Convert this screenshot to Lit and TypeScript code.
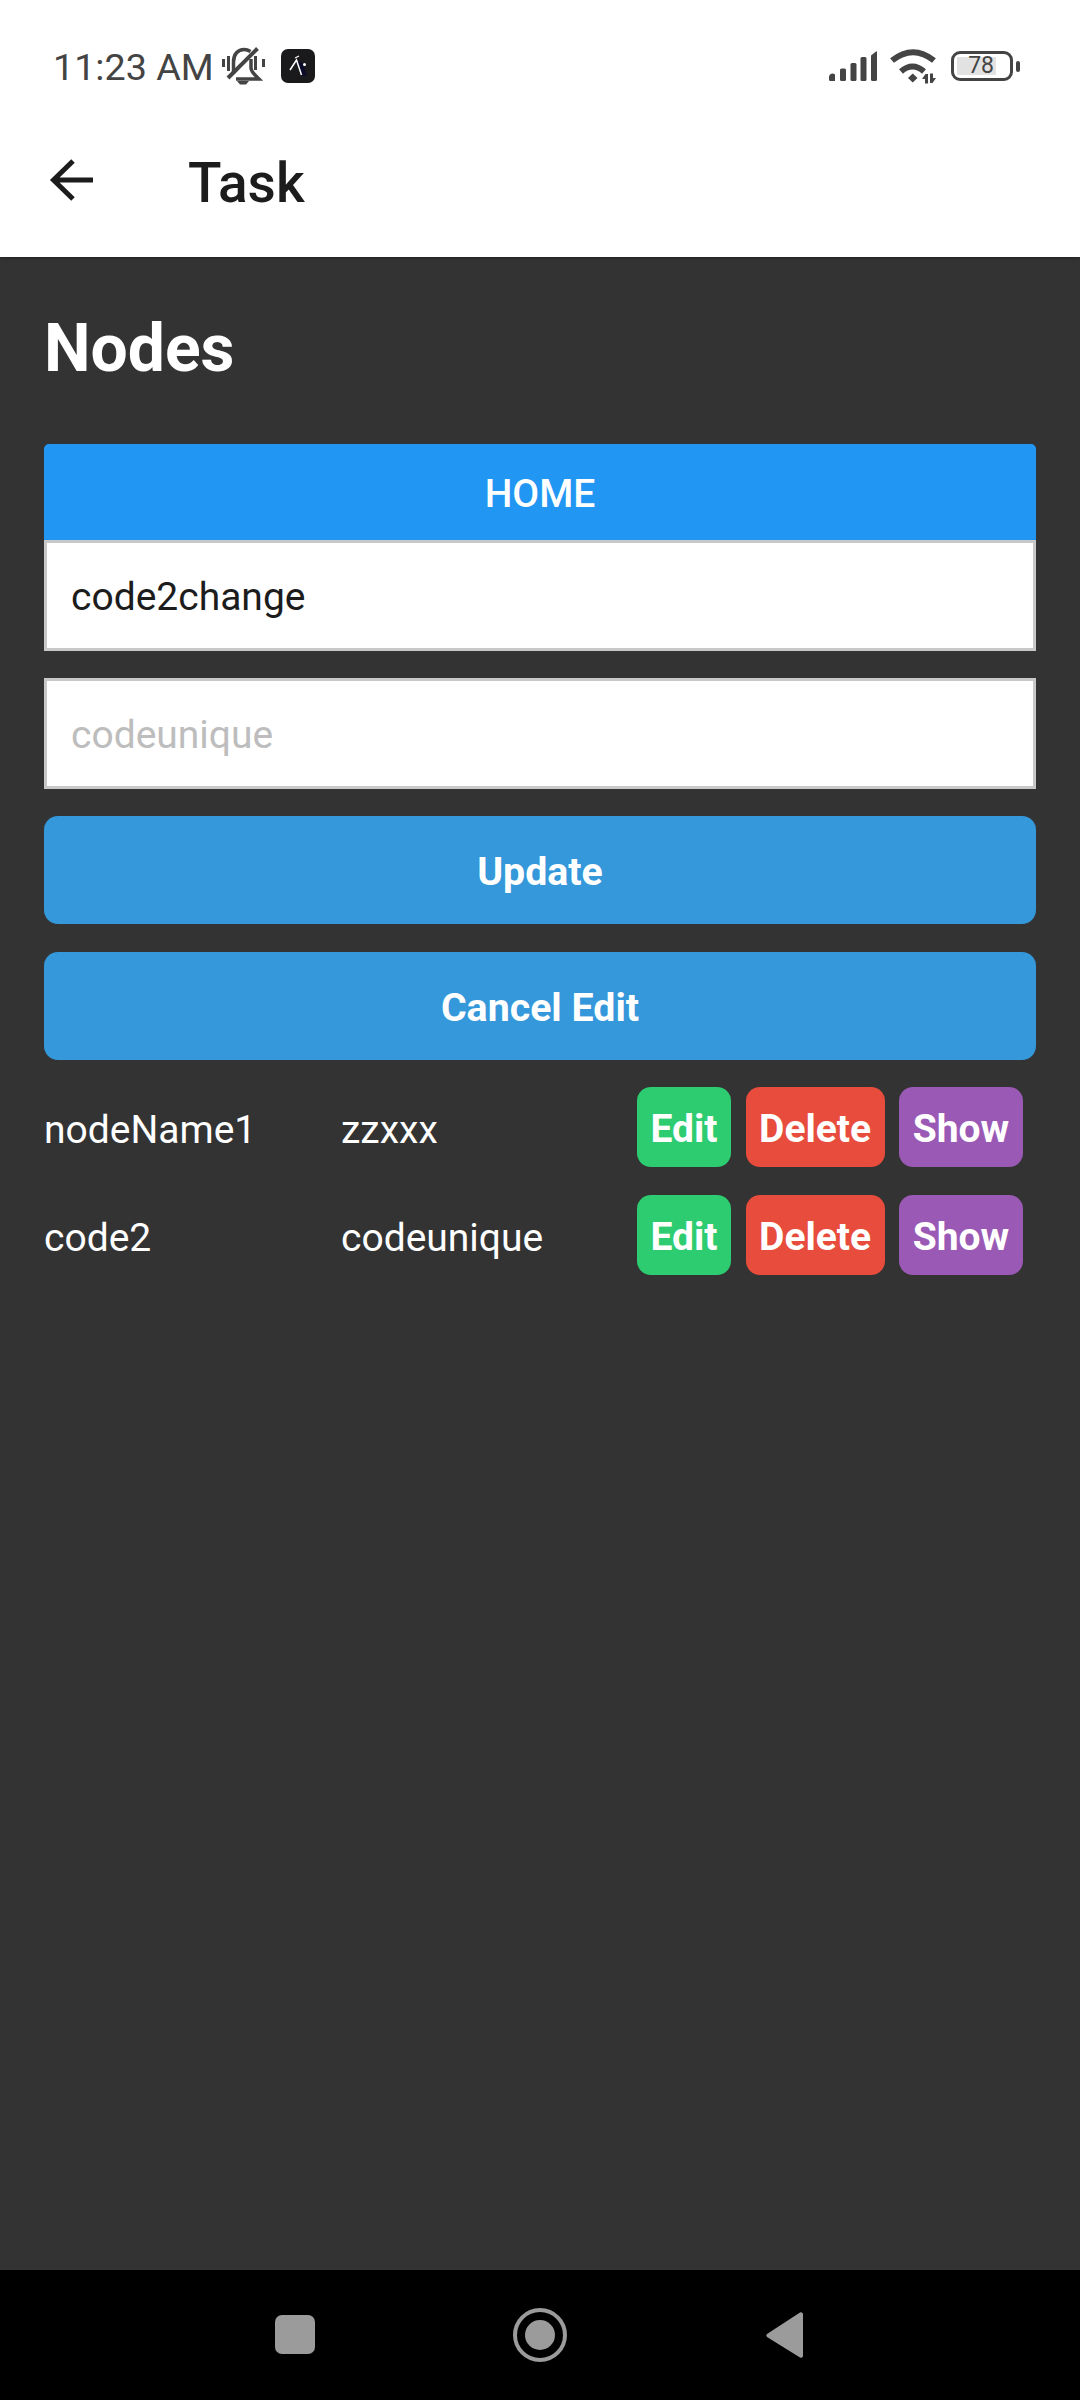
import { LitElement, css, html, svg } from 'lit';
import { customElement } from 'lit/decorators.js';

const nodes = [
    { name: 'nodeName1', code: 'zzxxx' },
    { name: 'code2', code: 'codeunique' },
];

const signalIcon = svg`<svg class="signal" width="48" height="30" viewBox="0 0 48 30" fill="#444">
    <path d="M0 26a3.500 3.500 0 0 1 6-2.500v6.500h-4.500a1.500 1.500 0 0 1-1.500-1.500z"/>
    <rect x="11" y="17.500" width="6" height="12.500" rx="1.500"/>
    <rect x="21.500" y="12" width="6" height="18" rx="1.500"/>
    <rect x="31.500" y="6" width="6" height="24" rx="1.500"/>
    <path d="M42 4.500 47 0.500a0.600 0.600 0 0 1 1 .5v27.500a1.500 1.500 0 0 1-1.500 1.500h-3a1.500 1.500 0 0 1-1.500-1.500z"/>
</svg>`;

const wifiIcon = svg`<svg class="wifi" width="46" height="36" viewBox="0 0 46 36" fill="none">
    <path d="M2 12.500Q23 -4 44 12.500" stroke="#444" stroke-width="6"/>
    <path d="M11 23.500Q22.500 13.500 34 23.500" stroke="#444" stroke-width="6"/>
    <path d="M18 30 22.700 25.500l4.800 4.500-4.800 4.500z" fill="#444"/>
    <path d="M32 31l3.500-5h2.500v9.500h-3v-4.500zM40 25.500h3v4.500h3l-3.500 5H40z" fill="#444"/>
</svg>`;

const bellIcon = svg`<svg class="bell" width="46" height="38" viewBox="0 0 46 38" fill="none" stroke="#444">
    <path d="M13.500 27V15C13.500 7 18 2.500 24 2.500c2.500 0 4.500.7 6.500 2" stroke-width="3.500"/>
    <path d="M31 12v9c0 4 4 7 8 11H16" stroke-width="3.500"/>
    <path d="M37.500 1.500 8 31" stroke-width="4"/>
    <path d="M3.500 12v8M8.500 9v15M35.500 9v14M43.500 12v8" stroke-width="3"/>
    <path d="M17 34h12l-3 3.500h-6z" fill="#444" stroke="none"/>
</svg>`;

const appIcon = svg`<svg class="app" width="34" height="34" viewBox="0 0 34 34">
    <rect width="34" height="34" rx="7" fill="#1a1a1c"/>
    <path d="M15 13h6l5 14h-5z" fill="#0b0b2a"/>
    <path d="M9 21 15.500 11l5 15" fill="none" stroke="#fff" stroke-width="1.500"/>
    <path d="M14 9l4-2" stroke="#fff" stroke-width="1.200"/>
    <circle cx="23.500" cy="15.500" r="1.500" fill="#fff"/>
</svg>`;

@customElement('app-root')
export class AppRoot extends LitElement {

    static styles = css`
        :host {
            display: flex;
            flex-direction: column;
            height: 2400px;
            font-family: Roboto, "Noto Sans", sans-serif;
            background: #333333;
        }

        .top {
            flex: none;
            background: #fff;
            box-shadow: 0 1px 3px rgba(0, 0, 0, 0.4);
            position: relative;
        }

        .status {
            display: flex;
            align-items: center;
            height: 132px;
            box-sizing: border-box;
            padding: 0 60px 0 53px;
            color: #444;
            font-size: 37.700px;
        }

        .status .time {
            width: 167px;
            padding-top: 2px;
        }

        .status .bell {
            margin-right: 15px;
        }

        .status .right {
            margin-left: auto;
            display: flex;
            align-items: center;
        }

        .wifi {
            margin: 0 15px 0 13px;
        }

        .battery {
            display: flex;
            align-items: center;
            width: 62px;
            height: 30px;
            box-sizing: border-box;
            border: 3px solid #444;
            border-radius: 9px;
            padding: 0 14px 0 3px;
        }

        .battery span {
            flex: 1;
            height: 18px;
            line-height: 18px;
            padding-right: 2px;
            background: #e2e2e2;
            font-size: 23px;
            text-align: right;
        }

        .nub {
            width: 4px;
            height: 11px;
            margin-left: 3px;
            border-radius: 2px;
            background: #444;
        }

        .header {
            display: flex;
            align-items: center;
            height: 125px;
            padding: 0 0 29px 49px;
            box-sizing: border-box;
            color: #1c1c1c;
        }

        .header svg {
            margin-right: 95px;
        }

        .header h1 {
            margin: 0;
            padding-top: 6px;
            font-size: 55px;
            font-weight: 500;
        }

        .content {
            flex: 1;
            padding: 0 44px;
            color: #fff;
        }

        .content h2 {
            margin: 0;
            padding-top: 57px;
            height: 138px;
            box-sizing: border-box;
            font-size: 66px;
            line-height: 70px;
            font-weight: 700;
        }

        .home {
            height: 96px;
            margin-top: 49px;
            line-height: 101px;
            text-align: center;
            background: #2196f3;
            border-radius: 5px 5px 0 0;
            font-size: 39px;
            font-weight: 500;
        }

        .input {
            height: 111px;
            line-height: 109px;
            box-sizing: border-box;
            padding: 0 24px;
            background: #fff;
            border: 3px solid #c8c8c8;
            color: #1c1c1c;
            font-size: 39px;
            margin-bottom: 27px;
        }

        .input.placeholder {
            color: #bdbdbd;
        }

        .action {
            height: 108px;
            line-height: 113px;
            margin-bottom: 27.500px;
            text-align: center;
            background: #3498db;
            border-radius: 14px;
            font-size: 39.300px;
            font-weight: 700;
        }

        .row {
            display: grid;
            grid-template-columns: 297px 296px auto;
            align-items: center;
            height: 80px;
            margin-bottom: 28px;
            font-size: 39px;
        }

        .row span {
            padding-top: 6px;
        }

        .buttons {
            display: flex;
        }

        .btn {
            height: 80px;
            line-height: 85px;
            padding: 0 13.500px;
            margin-right: 14.500px;
            border-radius: 14px;
            font-size: 39px;
            font-weight: 700;
        }

        .edit { background: #2ecc71; }
        .delete { background: #e74c3c; }
        .show { background: #9b59b6; }

        .nav {
            display: flex;
            flex: none;
            align-items: center;
            height: 130px;
            padding-left: 275px;
            background: #000;
        }
    `;

    render() {
        return html`
            <div class="top">
                <div class="status">
                    <span class="time">11:23 AM</span>
                    ${bellIcon}
                    ${appIcon}
                    <div class="right">
                        ${signalIcon}
                        ${wifiIcon}
                        <div class="battery"><span>78</span></div>
                        <div class="nub"></div>
                    </div>
                </div>
                <div class="header">
                    <svg width="44" height="44" viewBox="0 0 44 44" fill="none" stroke="#1c1c1c" stroke-width="5">
                        <path d="M44 22H4M24 3 4.500 22 24 41"/>
                    </svg>
                    <h1>Task</h1>
                </div>
            </div>
            <div class="content">
                <h2>Nodes</h2>
                <div class="home">HOME</div>
                <div class="input">code2change</div>
                <div class="input placeholder">codeunique</div>
                <div class="action">Update</div>
                <div class="action">Cancel Edit</div>
                ${nodes.map((n) => html`
                    <div class="row">
                        <span>${n.name}</span>
                        <span>${n.code}</span>
                        <div class="buttons">
                            <div class="btn edit">Edit</div>
                            <div class="btn delete">Delete</div>
                            <div class="btn show">Show</div>
                        </div>
                    </div>
                `)}
            </div>
            <div class="nav">
                <svg width="530" height="64" viewBox="0 0 530 64" fill="#9b9b9b">
                    <rect x="0" y="12" width="40" height="39" rx="7"/>
                    <circle cx="265" cy="32" r="25" fill="none" stroke="#9b9b9b" stroke-width="4"/>
                    <circle cx="265" cy="32" r="15"/>
                    <path d="M525 9.500a2 2 0 0 1 3 1.500v42a2 2 0 0 1-3 1.500L492 34a2 2 0 0 1 0-3z"/>
                </svg>
            </div>
        `;
    }
}
